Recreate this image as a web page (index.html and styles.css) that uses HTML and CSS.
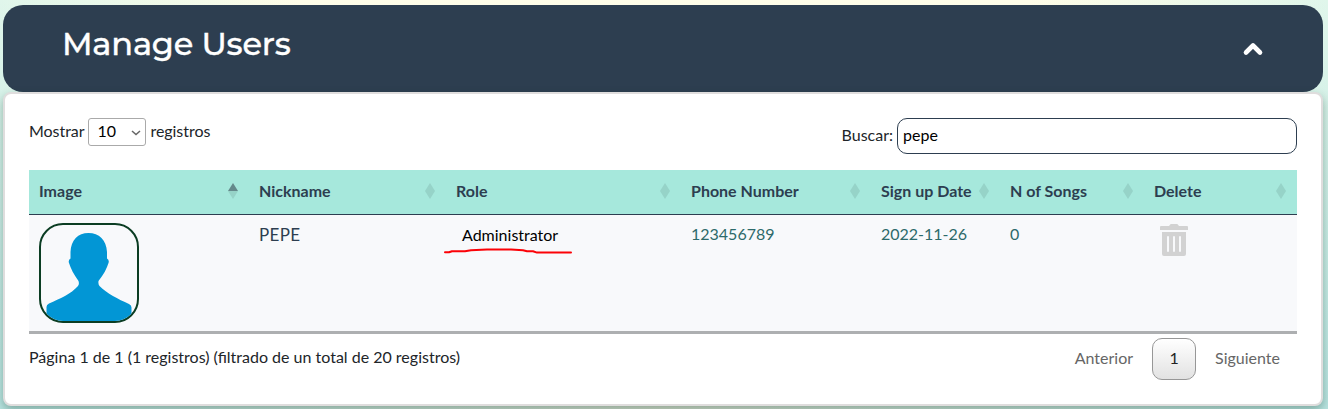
FILE: index.html
```html
<!DOCTYPE html>
<html lang="es">
<head>
<meta charset="utf-8">
<title>Manage Users</title>
<link rel="stylesheet" href="styles.css">
</head>
<body>
<header class="banner">
  <h1 class="title">Manage Users</h1>
  <svg class="chevron" width="22" height="16" viewBox="0 0 22 16"><path d="M4 11.5 11 4.5 18 11.5" fill="none" stroke="#fff" stroke-width="4.6" stroke-linecap="round" stroke-linejoin="round"/></svg>
</header>
<main class="card">
  <div class="controls">
    <div class="length"><span class="length-label">Mostrar</span><span class="select">10<svg class="caret" width="10" height="6" viewBox="0 0 10 6"><path d="M1 1 5 4.6 9 1" fill="none" stroke="#666" stroke-width="1.5"/></svg></span><span class="length-label">registros</span></div>
    <label class="search"><span class="search-label">Buscar:</span><input class="search-input" type="text" value="pepe"></label>
  </div>
  <table class="users">
    <colgroup><col class="c1"><col class="c2"><col class="c3"><col class="c4"><col class="c5"><col class="c6"><col class="c7"></colgroup>
    <thead>
      <tr>
        <th><div class="head">Image<span class="sort asc"></span></div></th>
        <th><div class="head">Nickname<span class="sort"></span></div></th>
        <th><div class="head">Role<span class="sort"></span></div></th>
        <th><div class="head">Phone Number<span class="sort"></span></div></th>
        <th><div class="head">Sign up Date<span class="sort"></span></div></th>
        <th><div class="head">N of Songs<span class="sort"></span></div></th>
        <th><div class="head">Delete<span class="sort"></span></div></th>
      </tr>
    </thead>
    <tbody>
      <tr>
        <td><div class="avatar"><svg width="96" height="96" viewBox="0 0 96 96"><path d="M5.5 96V82Q5.500 79.500 8 78.500C19 73.500 30 69 37 61Q38.500 59 37.500 56C33 50 29.500 43 28 38Q27 35 29.500 33.500V27C30 15 37 8 47.500 8S65.500 15 66 27V33.500Q68.500 35 67.500 38C66 43 62.500 50 57.500 56Q57 59 58.500 61C66 68.500 77 74 88 79Q90.500 80 90.500 82.500V96Z" fill="#0296d5"/></svg></div></td>
        <td class="nick">PEPE</td>
        <td class="role"><span class="role-name">Administrator<svg class="mark" width="130" height="8" viewBox="0 0 130 8"><path d="M2 5.300H6L9 4.200H22L28 3.200 44 2.400H68L80 3.200 84 4.200H90L94 5.600H128" fill="none" stroke="#fb0207" stroke-width="2" stroke-linecap="round" stroke-linejoin="round"/></svg></span></td>
        <td class="data">123456789</td>
        <td class="data">2022-11-26</td>
        <td class="data">0</td>
        <td><svg class="trash" width="28" height="32" viewBox="0 0 28 32"><path fill-rule="evenodd" fill="#d2d2d2" d="M1 2H9L10 .7Q10.300 0 11 0H17Q17.700 0 18 .7L19 2H27Q28 2 28 3V6H0V3Q0 2 1 2ZM2 8H26V30Q26 32 24 32H4Q2 32 2 30ZM7 13V27Q7 28 8 28T9 27V13Q9 12 8 12T7 13ZM13 13V27Q13 28 14 28T15 27V13Q15 12 14 12T13 13ZM19 13V27Q19 28 20 28T21 27V13Q21 12 20 12T19 13Z"/></svg></td>
      </tr>
    </tbody>
  </table>
  <footer class="foot">
    <div class="info">Página 1 de 1 (1 registros) (filtrado de un total de 20 registros)</div>
    <nav class="pages"><span class="step">Anterior</span><span class="current">1</span><span class="step">Siguiente</span></nav>
  </footer>
</main>
</body>
</html>
```
FILE: styles.css
```css
* { box-sizing: border-box; }
body {
  margin: 0;
  padding: 5px 5px 3px 3px;
  height: 409px;
  overflow: hidden;
  font: 16px/20px Lato, sans-serif;
  color: #212529;
  background:
    linear-gradient(90deg, #b9e4e1 0, #d5dccb 50%, #b9e4e1 100%) 0 100% / 100% 8px no-repeat,
    linear-gradient(rgba(185, 228, 225, 0) 0%, rgba(185, 228, 225, 1) 100%),
    linear-gradient(90deg, #e0f6eb 0, #fffde8 300px, #fffde8 1030px, #e0f6eb 100%);
}
.banner {
  height: 87px;
  display: flex;
  justify-content: space-between;
  align-items: center;
  padding: 0 59px 0 60px;
  border-radius: 20px;
  background: #2d3e50;
  color: #fff;
}
.title {
  margin: 0 0 10px -1px;
  font: 500 32px/40px Montserrat, Inter, sans-serif;
  letter-spacing: -0.2px;
  -webkit-text-stroke: 0.35px #fff;
}
.chevron { margin-top: 1px; }
.card {
  height: 314px;
  padding: 24px;
  border: 2px solid #dfdddd;
  border-radius: 8px;
  background: #fff;
  box-shadow: 0 4px 10px rgba(0, 50, 30, .32);
}
.controls {
  height: 52px;
  display: flex;
  justify-content: space-between;
  align-items: flex-start;
}
.length { display: flex; align-items: center; gap: 4px; letter-spacing: -0.05px; }
.length-label { padding-bottom: 2px; }
.select {
  width: 58px;
  height: 28px;
  padding: 0 4px 2px 8px;
  display: flex;
  align-items: center;
  justify-content: space-between;
  border: 1px solid #aaa;
  border-radius: 3px;
  color: #000;
}
.caret { margin-top: 3px; }
.search { display: flex; align-items: center; gap: 4px; }
.search-label { padding-bottom: 2px; }
.search-input {
  width: 400px;
  height: 36px;
  padding: 0 5px 3px;
  border: 1px solid #2d3e50;
  border-radius: 10px;
  font: inherit;
  color: #000;
  background: #fff;
}
.users { width: 1268px; table-layout: fixed; border-spacing: 0; }
.c1 { width: 220px; }
.c2 { width: 197px; }
.c3 { width: 235px; }
.c4 { width: 190px; }
.c5 { width: 129px; }
.c6 { width: 144px; }
.c7 { width: 153px; }
.users th {
  height: 45px;
  padding: 0 11px 2px 10px;
  border-bottom: 1px solid #2d3e50;
  background: #a6e8dc;
  color: #2d3e50;
  text-align: left;
  font-weight: 700;
  white-space: nowrap;
}
.head { display: flex; justify-content: space-between; align-items: center; }
.sort::before, .sort::after {
  content: "";
  display: block;
  border: 5px solid transparent;
}
.sort::before { border-top: 0; border-bottom: 8px solid #96d3c8; }
.sort::after { border-bottom: 0; border-top: 8px solid #96d3c8; }
.asc::before { border-bottom-color: #64898b; }
.users td {
  height: 119px;
  padding: 8px 10px;
  border-bottom: 3px solid #adafb1;
  background: #f8f9fb;
  vertical-align: top;
}
.users .nick { padding-top: 10px; color: #2d3e50; font-size: 17px; letter-spacing: 0.3px; }
.users .role { padding: 10px 16px; color: #000; }
.users .data { padding-top: 9px; color: #2d6a6a; }
.role-name { position: relative; }
.mark { position: absolute; left: -19px; top: 22px; }
.avatar {
  width: 100px;
  height: 100px;
  overflow: hidden;
  border: 2px solid #0b3d23;
  border-radius: 24px;
}
.avatar svg { display: block; }
.trash { display: block; margin: 1px 0 0 6px; }
.foot {
  display: flex;
  justify-content: space-between;
  align-items: flex-start;
  padding-top: 4px;
}
.info { padding-top: 9px; }
.pages {
  display: flex;
  align-items: center;
  gap: 19px;
  padding-right: 17px;
  color: #666;
}
.step { padding-bottom: 2px; }
.current {
  width: 44px;
  height: 42px;
  line-height: 38px;
  text-align: center;
  border: 1px solid #979797;
  border-radius: 10px;
  color: #222;
  background: linear-gradient(#fff, #e2e2e2);
}
```
